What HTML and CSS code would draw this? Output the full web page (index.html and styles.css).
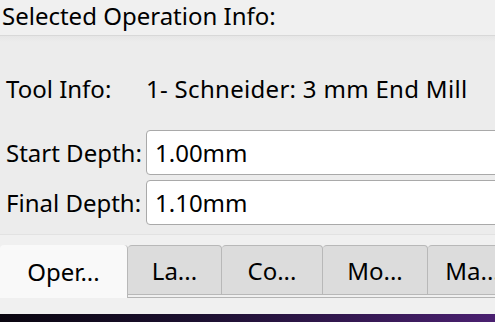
FILE: index.html
```html
<!DOCTYPE html>
<html lang="en">
<head>
  <meta charset="UTF-8">
  <title>Selected Operation Info</title>
  <link rel="stylesheet" href="styles.css">
</head>
<body>
  <div class="panel">
    <div class="header">Selected Operation Info:</div>

    <!-- operation group -->
    <div class="group">
      <div class="row info">
        <span class="label">Tool Info:</span>
        <span class="value">1- Schneider: 3 mm End Mill</span>
      </div>
      <div class="row field">
        <label class="label" for="start-depth">Start Depth:</label>
        <input type="text" id="start-depth" value="1.00mm">
      </div>
      <div class="row field">
        <label class="label" for="final-depth">Final Depth:</label>
        <input type="text" id="final-depth" value="1.10mm">
      </div>
    </div>

    <!-- tabs -->
    <div class="tabs">
      <div class="tab active">Oper...</div>
      <div class="tab t-la">La...</div>
      <div class="tab t-co">Co...</div>
      <div class="tab t-mo">Mo...</div>
      <div class="tab t-ma">Ma...</div>
    </div>
  </div>
  <div class="taskbar"></div>
</body>
</html>
```

FILE: styles.css
```css
* {
  box-sizing: border-box;
}

body {
  margin: 0;
  width: 495px;
  height: 322px;
  overflow: hidden;
  background-color: #f0f0f0;
  font-family: "Noto Sans", "Open Sans", sans-serif;
  font-size: 24px;
  color: #000;
}

.panel {
  height: 314px;
  display: flex;
  flex-direction: column;
}

.header {
  height: 36px;
  padding-left: 2px;
  line-height: 32px;
  white-space: nowrap;
  border-bottom: 1px solid #d8d8d8;
}

.group {
  height: 199px;
  background: linear-gradient(#e6e6e6, #ececec 6px, #ececec);
  border-bottom: 1px solid #e2e2e2;
  padding: 34px 0 0 6px;
  display: flex;
  flex-direction: column;
}

.row {
  display: flex;
  align-items: center;
  white-space: nowrap;
}

.row .label {
  width: 140px;
  flex: none;
}

.value {
  letter-spacing: 0.3px;
}

.info {
  height: 36px;
  margin-bottom: 24px;
}

.field {
  height: 45px;
  margin-bottom: 5px;
}

input {
  flex: 1;
  height: 45px;
  margin-right: -20px;
  padding: 0 8px;
  font: inherit;
  border: 1.5px solid #a9a9a9;
  border-radius: 4px;
  background-color: #fff;
}

.tabs {
  margin-top: 10px;
  height: 53px;
  display: flex;
  align-items: flex-start;
  border-bottom: 1px solid #b4b4b4;
}

.tab {
  height: 50px;
  flex: none;
  display: flex;
  align-items: center;
  justify-content: center;
  white-space: nowrap;
  background-color: #dcdcdc;
  border: 1.5px solid #b8b8b8;
  border-radius: 4px 4px 0 0;
  border-left-width: 0;
}

.tab.active {
  width: 128px;
  height: 53px;
  background-color: #f9f9f9;
  border: none;
  border-right: 1.5px solid #b8b8b8;
}

.t-la { width: 94px; }
.t-co { width: 101px; }
.t-mo { width: 105px; }
.t-ma { width: 90px; }

.taskbar {
  height: 8px;
  background: linear-gradient(90deg, #0a0610, #1c1030 40%, #4a2070);
}
```
